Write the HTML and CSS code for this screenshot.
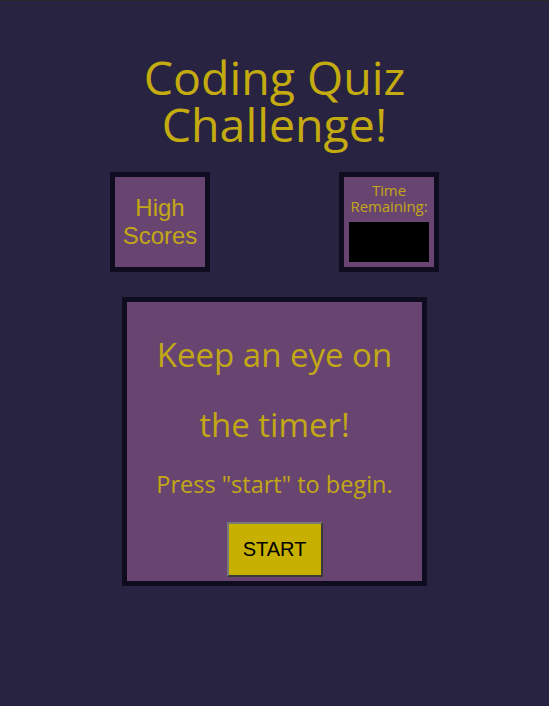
FILE: index.html
```html
<!DOCTYPE html>
<html lang="en">
<head>
<meta charset="utf-8">
<title>Coding Quiz Challenge</title>
<link rel="stylesheet" href="styles.css">
</head>
<body>
<div class="topline"></div>
<main class="page">
  <h1 class="title"><span class="title-line">Coding Quiz</span><span class="title-line">Challenge!</span></h1>
  <div class="header-row">
    <a class="high-scores" href="#">High<br>Scores</a>
    <div class="timer">
      <div class="timer-label">Time<br>Remaining:</div>
      <div class="timer-display"></div>
    </div>
  </div>
  <section class="card">
    <h2 class="card-title">Keep an eye on the timer!</h2>
    <p class="card-text">Press "start" to begin.</p>
    <button class="start-btn" type="button">START</button>
  </section>
</main>
</body>
</html>
```
FILE: styles.css
```css
html, body {
  margin: 0;
  padding: 0;
  background: #272341;
  height: 100%;
}
body {
  font-family: "Open Sans", "Noto Sans", sans-serif;
  color: #c2a816;
}
.topline {
  height: 1px;
  background: #262626;
}
.page {
  display: flex;
  flex-direction: column;
  align-items: center;
}
.title {
  margin: 53px 0 0;
  font-size: 46.5px;
  font-weight: 400;
  line-height: 47px;
  text-align: center;
  color: #c4ab10;
  display: flex;
  flex-direction: column;
  align-items: center;
}
.title-line {
  display: block;
  height: 47px;
}
.header-row {
  margin-top: 24px;
  width: 329px;
  display: flex;
  justify-content: space-between;
}
.high-scores {
  box-sizing: border-box;
  width: 100px;
  height: 100px;
  border: 5px solid #100c20;
  background: #684470;
  display: flex;
  align-items: center;
  justify-content: center;
  text-align: center;
  font-family: "Liberation Sans", Arial, sans-serif;
  font-size: 24px;
  line-height: 28px;
  color: #c2a816;
  text-decoration: none;
}
.timer {
  box-sizing: border-box;
  width: 100px;
  height: 100px;
  border: 5px solid #100c20;
  background: #684470;
  display: flex;
  flex-direction: column;
  align-items: center;
  padding: 5px 5px 5px;
}
.timer-label {
  font-size: 15px;
  line-height: 16px;
  text-align: center;
  letter-spacing: -0.1px;
}
.timer-display {
  margin-top: auto;
  width: 80px;
  height: 40px;
  background: #000;
}
.card {
  box-sizing: border-box;
  margin-top: 25px;
  width: 305px;
  height: 289px;
  border: 5px solid #100c20;
  background: #684470;
  display: flex;
  flex-direction: column;
  align-items: center;
  padding: 18px 20px 0;
  text-align: center;
}
.card-title {
  margin: 0;
  font-size: 33px;
  font-weight: 400;
  line-height: 70px;
}
.card-text {
  margin: 9px 0 0;
  font-size: 23.5px;
  line-height: 30px;
}
.start-btn {
  margin-top: 23px;
  width: 96px;
  height: 55px;
  background: #c8b000;
  border: 2px solid;
  border-color: #7a7a7a #3a3a3a #3a3a3a #7a7a7a;
  font-family: "Liberation Sans", Arial, sans-serif;
  font-size: 20px;
  color: #000;
  padding: 0;
}
```
